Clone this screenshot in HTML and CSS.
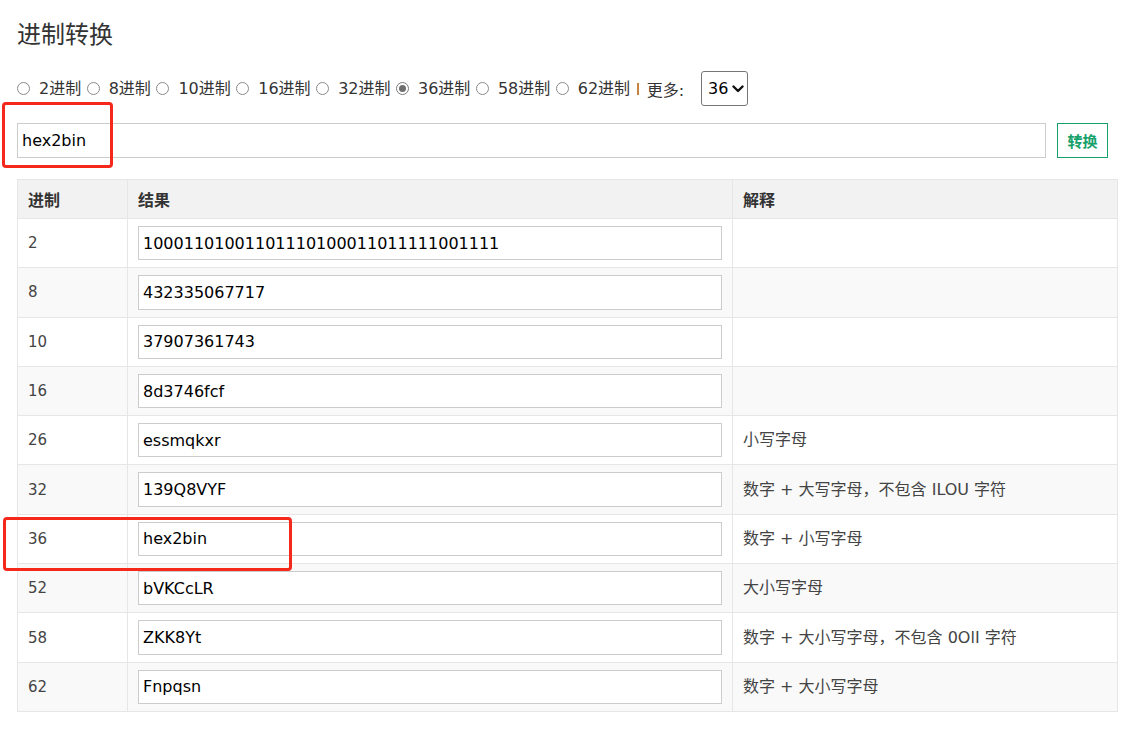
FILE: index.html
```html
<!DOCTYPE html>
<html lang="zh-CN">
<head>
<meta charset="utf-8">
<title>进制转换</title>
<link rel="stylesheet" href="styles.css">
</head>
<body>
<div class="page">
  <h1 class="title">进制转换</h1>
  <div class="options">
    <label class="opt"><input type="radio" name="base" class="radio"><span>2进制</span></label>
    <label class="opt"><input type="radio" name="base" class="radio"><span>8进制</span></label>
    <label class="opt"><input type="radio" name="base" class="radio"><span>10进制</span></label>
    <label class="opt"><input type="radio" name="base" class="radio"><span>16进制</span></label>
    <label class="opt"><input type="radio" name="base" class="radio"><span>32进制</span></label>
    <label class="opt"><input type="radio" name="base" class="radio" checked><span>36进制</span></label>
    <label class="opt"><input type="radio" name="base" class="radio"><span>58进制</span></label>
    <label class="opt"><input type="radio" name="base" class="radio"><span>62进制</span></label>
    <span class="sep"></span>
    <span class="more">更多:</span>
    <span class="select-wrap">
      <select class="select"><option>36</option></select>
      <svg class="chev" width="12" height="8" viewBox="0 0 12 8"><path d="M1.5 1.5 L6 6 L10.5 1.5" fill="none" stroke="#111" stroke-width="2.4" stroke-linecap="round" stroke-linejoin="round"/></svg>
    </span>
  </div>
  <div class="convert">
    <input class="main-input" type="text" value="hex2bin">
    <button class="btn">转换</button>
  </div>
  <table class="result">
    <colgroup><col class="c1"><col class="c2"><col class="c3"></colgroup>
    <thead>
      <tr><th>进制</th><th>结果</th><th>解释</th></tr>
    </thead>
    <tbody>
      <tr><td class="base">2</td><td><input class="cell-input" type="text" value="10001101001101110100011011111001111"></td><td></td></tr>
      <tr><td class="base">8</td><td><input class="cell-input" type="text" value="432335067717"></td><td></td></tr>
      <tr><td class="base">10</td><td><input class="cell-input" type="text" value="37907361743"></td><td></td></tr>
      <tr><td class="base">16</td><td><input class="cell-input" type="text" value="8d3746fcf"></td><td></td></tr>
      <tr><td class="base">26</td><td><input class="cell-input" type="text" value="essmqkxr"></td><td>小写字母</td></tr>
      <tr><td class="base">32</td><td><input class="cell-input" type="text" value="139Q8VYF"></td><td>数字 + 大写字母，不包含 ILOU 字符</td></tr>
      <tr><td class="base">36</td><td><input class="cell-input" type="text" value="hex2bin"></td><td>数字 + 小写字母</td></tr>
      <tr><td class="base">52</td><td><input class="cell-input" type="text" value="bVKCcLR"></td><td>大小写字母</td></tr>
      <tr><td class="base">58</td><td><input class="cell-input" type="text" value="ZKK8Yt"></td><td>数字 + 大小写字母，不包含 0OlI 字符</td></tr>
      <tr><td class="base">62</td><td><input class="cell-input" type="text" value="Fnpqsn"></td><td>数字 + 大小写字母</td></tr>
    </tbody>
  </table>
  <div class="mark mark-input"></div>
  <div class="mark mark-row"></div>
</div>
</body>
</html>
```

FILE: styles.css
```css
html, body {
  margin: 0;
  padding: 0;
  background: #fff;
}
body {
  font-family: "DejaVu Sans", "Noto Sans CJK SC", sans-serif;
  font-size: 16px;
  color: #333;
}
.page {
  position: relative;
  padding: 16px 23px 0 17px;
}
.title {
  margin: 0;
  font-size: 24px;
  line-height: 34px;
  font-weight: normal;
  color: #333;
  font-family: "Noto Sans CJK SC", sans-serif;
}
.options {
  margin-top: 21px;
  height: 35px;
  display: flex;
  align-items: center;
}
.opt {
  display: inline-flex;
  align-items: center;
  margin-right: 5.5px;
  color: #333;
  line-height: 20px;
}
.radio {
  appearance: none;
  -webkit-appearance: none;
  width: 13px;
  height: 13px;
  margin: 0 9px 0 0;
  border: 1px solid #8a8a8a;
  border-radius: 50%;
  box-sizing: border-box;
  background: #fff;
  position: relative;
}
.radio:checked {
  border-color: #7a7a7a;
}
.radio:checked::after {
  content: "";
  position: absolute;
  left: 2px;
  top: 2px;
  width: 7px;
  height: 7px;
  border-radius: 50%;
  background: #6f6f6f;
}
.sep {
  width: 2px;
  height: 12px;
  background: #c8843f;
  margin: 0 8px 0 1px;
}
.more {
  color: #333;
  margin-right: 17px;
}
.select-wrap {
  position: relative;
  display: inline-block;
  height: 35px;
}
.select {
  appearance: none;
  -webkit-appearance: none;
  width: 47px;
  height: 35px;
  box-sizing: border-box;
  border: 1px solid #767676;
  border-radius: 3px;
  background: #fff;
  padding: 0 0 0 6px;
  font-family: "DejaVu Sans", sans-serif;
  font-size: 16px;
  color: #000;
}
.chev {
  position: absolute;
  left: 31px;
  top: 14px;
  pointer-events: none;
}
.convert {
  margin-top: 17px;
  display: flex;
  gap: 11px;
  height: 35px;
}
.main-input {
  width: 1029px;
  height: 35px;
  box-sizing: border-box;
  border: 1px solid #ccc;
  padding: 0 4px;
  margin: 0;
  font-family: "DejaVu Sans", sans-serif;
  font-size: 16px;
  color: #000;
  outline: none;
}
.btn {
  width: 51px;
  height: 35px;
  box-sizing: border-box;
  border: 1px solid #16a06a;
  background: #fff;
  color: #16a06a;
  font-family: "Noto Sans CJK SC", sans-serif;
  font-size: 15px;
  font-weight: bold;
  padding: 0;
  margin: 0;
}
.result {
  margin-top: 21px;
  width: 1100px;
  border-collapse: collapse;
  border: 1px solid #e6e6e6;
  table-layout: fixed;
}
.c1 { width: 110px; }
.c2 { width: 605px; }
.c3 { width: 385px; }
.result th {
  background: #f2f2f2;
  text-align: left;
  font-weight: bold;
  color: #333;
  padding: 8px 10px;
  line-height: 22px;
  border: 1px solid #e6e6e6;
  font-family: "Noto Sans CJK SC", sans-serif;
  font-size: 16px;
}
.result td {
  padding: 7px 10px;
  border: 1px solid #e6e6e6;
  color: #444;
  line-height: 20px;
}
.result td.base {
  font-size: 15px;
}
.result tbody tr:nth-child(even) td {
  background: #f9f9f9;
}
.cell-input {
  display: block;
  width: 100%;
  height: 34.3px;
  box-sizing: border-box;
  border: 1px solid #ccc;
  padding: 0 4px;
  margin: 0;
  font-family: "DejaVu Sans", sans-serif;
  font-size: 16px;
  color: #000;
  background: #fff;
  outline: none;
}
.mark {
  position: absolute;
  border: 3px solid #f5281c;
  border-radius: 4px;
  box-sizing: border-box;
}
.mark-input {
  left: 2px;
  top: 102px;
  width: 111px;
  height: 66px;
}
.mark-row {
  left: 3px;
  top: 517px;
  width: 289px;
  height: 54px;
}
```
